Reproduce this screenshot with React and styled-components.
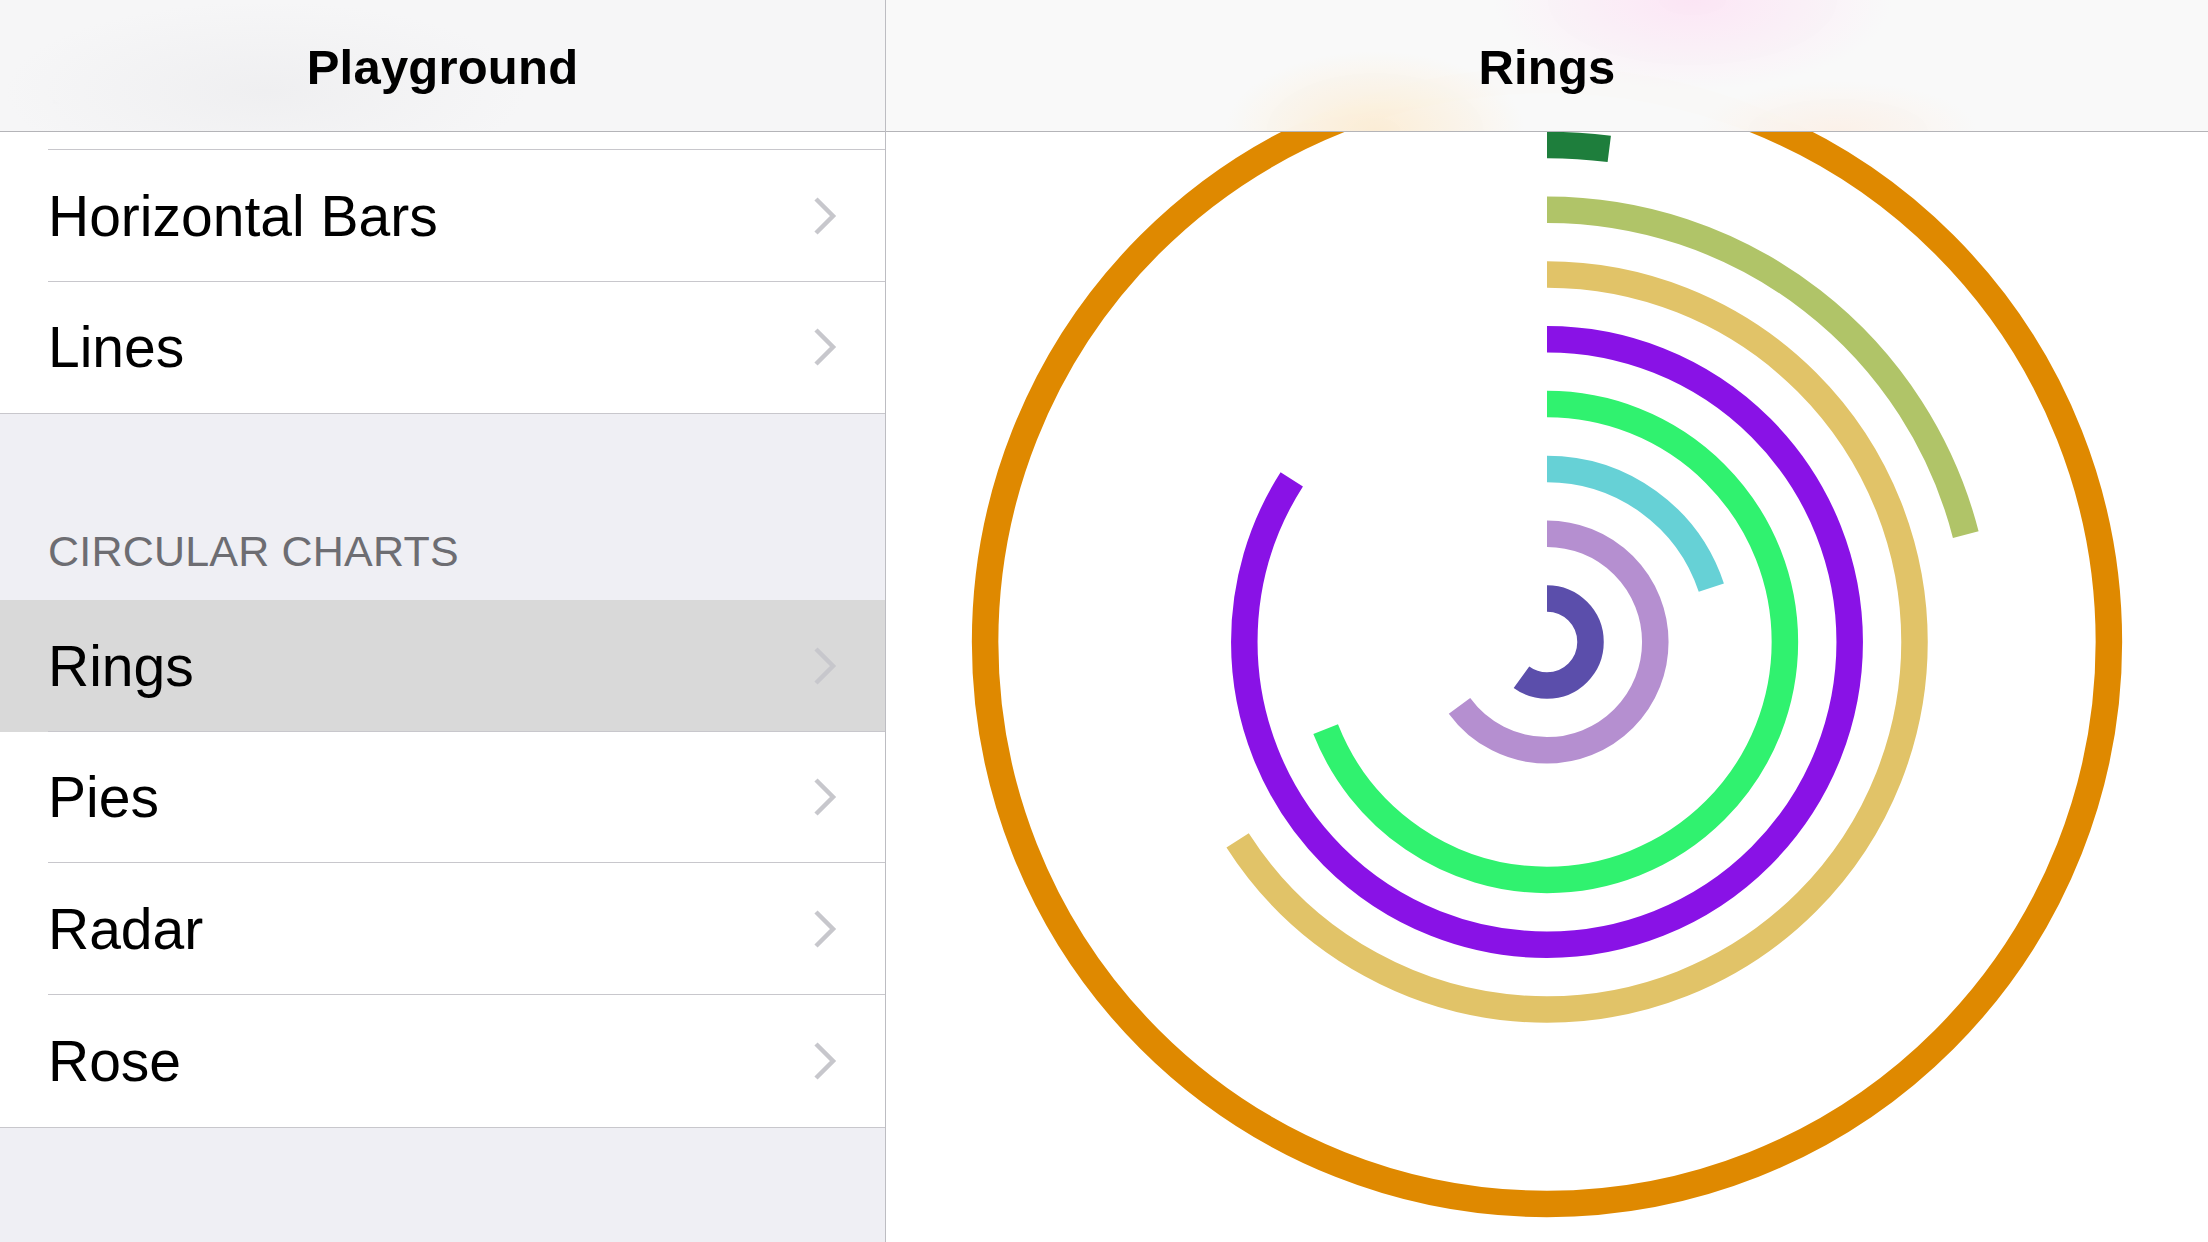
import React from 'react';
import styled, { createGlobalStyle } from 'styled-components';

const GlobalStyle = createGlobalStyle`
  html, body {
    margin: 0;
    padding: 0;
    overflow: hidden;
    background: #ffffff;
    font-family: "Liberation Sans", Arial, sans-serif;
  }
`;

const ROW_HEIGHT = 131.67;

const Screen = styled.div`
  display: flex;
  width: 100vw;
  height: 100vh;
`;

const Sidebar = styled.aside`
  position: relative;
  width: 885px;
  flex-shrink: 0;
  height: 100%;
  overflow: hidden;
  background: #efeff4;
  border-right: 1px solid #bdbdc2;
`;

const Detail = styled.main`
  position: relative;
  flex: 1;
  height: 100%;
  overflow: hidden;
  background: #ffffff;
`;

const NavBar = styled.header`
  position: absolute;
  top: 0;
  left: 0;
  right: 0;
  z-index: 2;
  height: 132px;
  padding-top: 2px;
  box-sizing: border-box;
  display: flex;
  align-items: center;
  justify-content: center;
  border-bottom: 1px solid #b4b4b8;
  background: ${(p) =>
    p.$tinted
      ? `radial-gradient(ellipse 200px 90px at 61% 0%, rgba(255, 205, 240, 0.45), transparent 100%),
         radial-gradient(ellipse 150px 80px at 37% 100%, rgba(255, 222, 170, 0.45), transparent 100%),
         radial-gradient(ellipse 140px 50px at 72% 100%, rgba(255, 225, 200, 0.35), transparent 100%),
         rgba(249, 249, 249, 0.985)`
      : `radial-gradient(ellipse 260px 90px at 30% 70%, rgba(225, 225, 228, 0.35), transparent 100%),
         rgba(246, 246, 247, 0.995)`};
  backdrop-filter: blur(60px);
  -webkit-backdrop-filter: blur(60px);
`;

const NavTitle = styled.h1`
  margin: 0;
  font-size: 49px;
  font-weight: 700;
  color: #000000;
  letter-spacing: 0.2px;
`;

const List = styled.div`
  padding-top: 18.33px;
`;

const Group = styled.section`
  background: #ffffff;
  border-bottom: 1px solid #c8c7cc;
`;

const SectionHeader = styled.div`
  height: 185.67px;
  box-sizing: border-box;
  display: flex;
  align-items: flex-end;
  padding: 0 48px 24px;
  font-size: 43px;
  color: #6d6d72;
  letter-spacing: 0.2px;
`;

const Row = styled.div`
  position: relative;
  height: ${ROW_HEIGHT}px;
  display: flex;
  align-items: center;
  justify-content: space-between;
  padding: 0 48px;
  background: ${(p) => (p.$selected ? '#d9d9d9' : '#ffffff')};

  &::after {
    content: '';
    display: ${(p) => (p.$last ? 'none' : 'block')};
    position: absolute;
    left: 48px;
    right: 0;
    bottom: 0;
    height: 1px;
    background: #c8c7cc;
  }
`;

const RowLabel = styled.span`
  font-size: 57px;
  color: #000000;
`;

const Chevron = () => (
  <svg width="24" height="40" viewBox="0 0 24 40" fill="none">
    <path d="M3 3 L20 20 L3 37" stroke="#c7c7cc" strokeWidth="4.5" />
  </svg>
);

const ChartArea = styled.div`
  display: flex;
  justify-content: center;
  padding-top: 66px;
`;

const rings = [
  { color: '#5b4eab', value: 0.599 },
  { color: '#b58fd0', value: 0.649 },
  { color: '#66d1d6', value: 0.199 },
  { color: '#30f26f', value: 0.69 },
  { color: '#8912e6', value: 0.84 },
  { color: '#e1c368', value: 0.659 },
  { color: '#b0c468', value: 0.21 },
  { color: '#1e7e3c', value: 0.02 },
  { color: '#df8900', value: 1 },
];

const SIZE = 1152;
const C = SIZE / 2;

const RingsChart = () => (
  <svg width={SIZE} height={SIZE} viewBox={`0 0 ${SIZE} ${SIZE}`}>
    {rings.map((ring, i) => {
      const r = 43.5 + 64.8 * i;
      const len = 2 * Math.PI * r;
      return (
        <circle
          key={ring.color}
          cx={C}
          cy={C}
          r={r}
          fill="none"
          stroke={ring.color}
          strokeWidth="26.5"
          strokeDasharray={ring.value >= 1 ? 'none' : `${len * ring.value} ${len}`}
          transform={`rotate(-90 ${C} ${C})`}
        />
      );
    })}
  </svg>
);

const firstGroup = ['Bars', 'Horizontal Bars', 'Lines'];
const circularGroup = ['Rings', 'Pies', 'Radar', 'Rose'];

const App = () => (
  <>
    <GlobalStyle />
    <Screen>
      <Sidebar>
        <NavBar>
          <NavTitle>Playground</NavTitle>
        </NavBar>
        <List>
          <Group>
            {firstGroup.map((name, i) => (
              <Row key={name} $last={i === firstGroup.length - 1}>
                <RowLabel>{name}</RowLabel>
                <Chevron />
              </Row>
            ))}
          </Group>
          <SectionHeader>CIRCULAR CHARTS</SectionHeader>
          <Group>
            {circularGroup.map((name, i) => (
              <Row
                key={name}
                $selected={name === 'Rings'}
                $last={i === circularGroup.length - 1}
              >
                <RowLabel>{name}</RowLabel>
                <Chevron />
              </Row>
            ))}
          </Group>
        </List>
      </Sidebar>
      <Detail>
        <NavBar $tinted>
          <NavTitle>Rings</NavTitle>
        </NavBar>
        <ChartArea>
          <RingsChart />
        </ChartArea>
      </Detail>
    </Screen>
  </>
);

export default App;
